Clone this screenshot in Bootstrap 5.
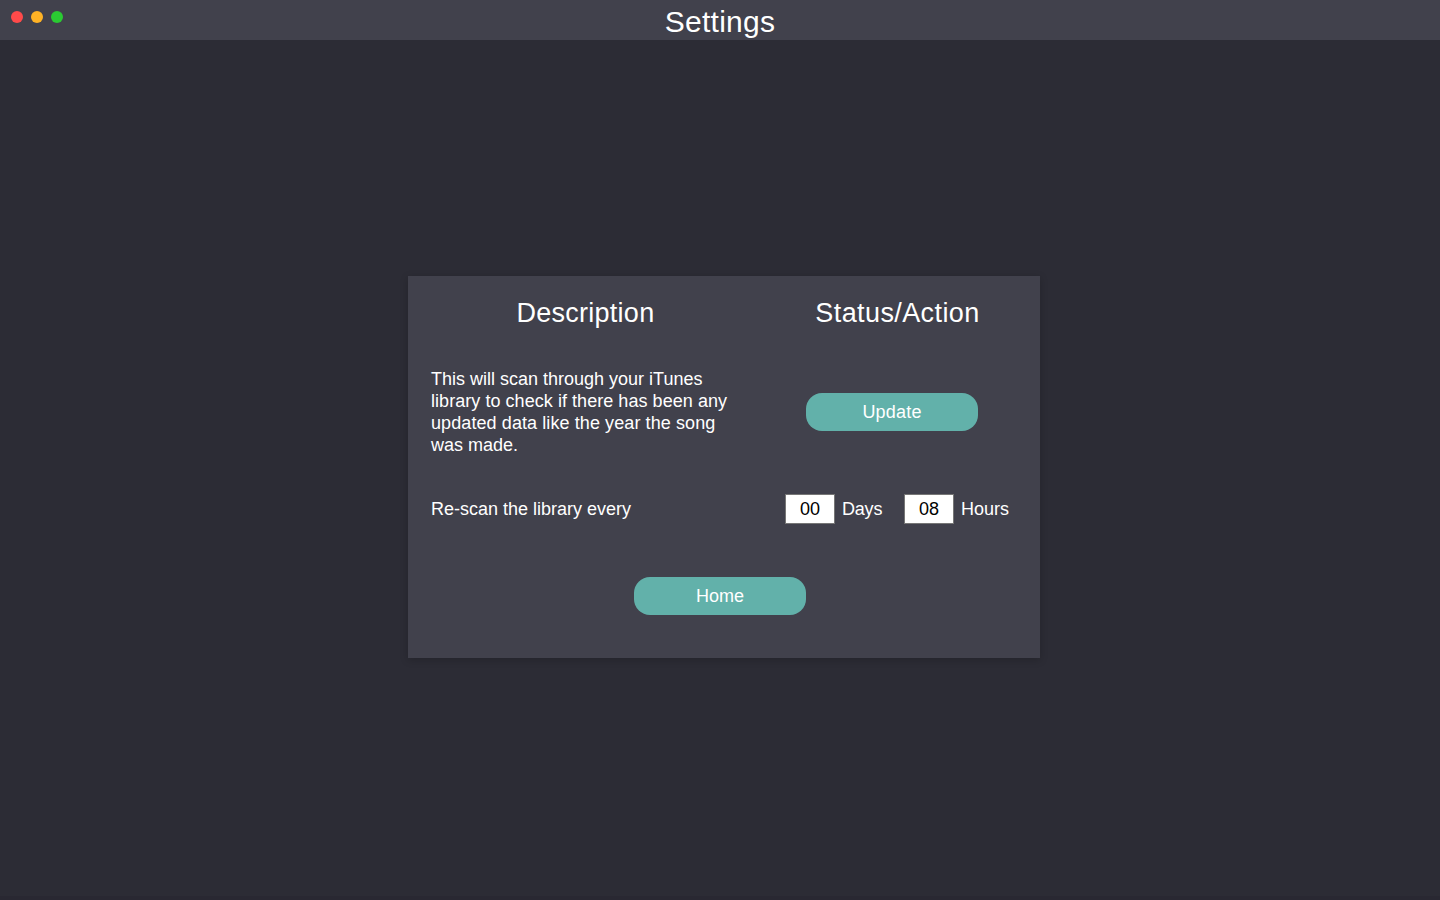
<!DOCTYPE html>
<html lang="en">
<head>
<meta charset="utf-8">
<title>Settings</title>
<link href="https://cdn.jsdelivr.net/npm/bootstrap@5.3.0/dist/css/bootstrap.min.css" rel="stylesheet">
<style>
body{background:#2c2c35;color:#fff;font-family:"Liberation Sans",Arial,sans-serif;font-size:18px;line-height:22px;border-bottom:4px solid #292832}
.titlebar{height:40px;background:#41414c}
.lights{gap:8px;padding:11px;width:120px}
.lights span{width:12px;height:12px}
.light-close{background:#ff4a4a}
.light-min{background:#ffb225}
.light-max{background:#2aca32}
.titlebar h1{font-size:30px;line-height:44px;font-weight:400;letter-spacing:.25px}
.panel{width:632px;height:382px;margin:236px 0 0 408px;background:#41414c;box-shadow:0 2px 8px rgba(0,0,0,.2)}
.panel h2{font-size:27px;line-height:32px;font-weight:400;letter-spacing:.25px}
.panel .h-action{padding-right:8px;letter-spacing:.4px}
.heads{padding-top:21px;height:92px}
.c-desc{width:355px;flex:none}
.c-desc .txt{padding-left:23px}
.wide-1{letter-spacing:.05px}
.wide-2{letter-spacing:.09px}
.action{padding:25px 0 0 43px}
.rescan{margin-top:38px}
.times{padding-left:22px}
.unit{margin-left:7px}
.unit-days{width:62px;letter-spacing:-.2px}
.btn-teal{width:172px;height:38px;padding:0;border:0;border-radius:16px;background:#62b1aa;color:#fff;font-size:18px;line-height:38px}
.btn-update{letter-spacing:.2px}
.btn-home{margin:53px 0 0 226px}
.btn-teal:hover{background:#569f99;color:#fff}
.num{width:50px;height:30px;padding:0;border:1px solid #767676;border-radius:0;font-size:18px;color:#000;background:#fff;text-align:center}
</style>
</head>
<body class="vh-100 overflow-hidden">
<header class="titlebar d-flex justify-content-between">
  <div class="lights d-flex">
    <span class="rounded-circle light-close"></span>
    <span class="rounded-circle light-min"></span>
    <span class="rounded-circle light-max"></span>
  </div>
  <h1 class="m-0">Settings</h1>
  <div class="lights"></div>
</header>
<main class="panel d-flex flex-column">
  <div class="heads d-flex text-center">
    <h2 class="c-desc m-0">Description</h2>
    <h2 class="h-action flex-fill m-0">Status/Action</h2>
  </div>
  <div class="d-flex">
    <div class="c-desc"><div class="txt">This will scan through your iTunes<br><span class="wide-1">library to check if there has been any</span><br><span class="wide-2">updated data like the year the song</span><br>was made.</div></div>
    <div class="action flex-fill"><button class="btn btn-teal btn-update d-block">Update</button></div>
  </div>
  <div class="rescan d-flex align-items-center">
    <div class="c-desc"><div class="txt">Re-scan the library every</div></div>
    <div class="times d-flex align-items-center">
      <input class="num" value="00" aria-label="Days"><span class="unit unit-days">Days</span>
      <input class="num" value="08" aria-label="Hours"><span class="unit">Hours</span>
    </div>
  </div>
  <button class="btn btn-teal btn-home">Home</button>
</main>
<script src="https://cdn.jsdelivr.net/npm/bootstrap@5.3.0/dist/js/bootstrap.bundle.min.js"></script>
</body>
</html>
